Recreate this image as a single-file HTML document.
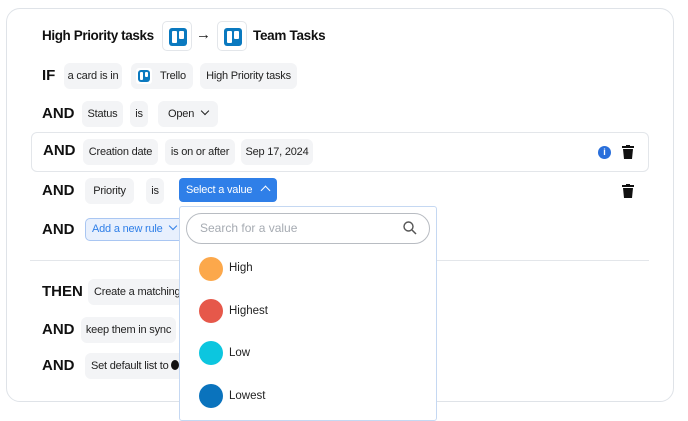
<!DOCTYPE html>
<html><head><style>
*{margin:0;padding:0;box-sizing:border-box}
body{width:688px;height:415px;background:#fff;font-family:"Liberation Sans",sans-serif;position:relative;overflow:hidden;color:#1a1a1a}
.a{position:absolute}
.card{left:6px;top:8px;width:668px;height:394px;border:1px solid #dfe3e8;border-radius:14px}
.k{position:absolute;font-weight:bold;font-size:15px;color:#111}
.chip{position:absolute;height:26px;background:#f3f4f6;border-radius:6px;font-size:11px;letter-spacing:-0.2px;line-height:26px;text-align:center;color:#222;white-space:nowrap;overflow:hidden}
.ib{position:absolute;width:30px;height:30px;border:1px solid #e3e6ea;border-radius:5px;background:#fff}
.tl{position:absolute;background:#0a79bf;border-radius:3px}
.tl i{position:absolute;background:#fff;border-radius:1px}
.dot{position:absolute;width:24px;height:24px;border-radius:50%}
.opt{position:absolute;font-size:11.5px;color:#222}
</style></head><body>
<div class="a card"></div>
<div class="k" style="left:42px;top:28px;font-size:13.5px;letter-spacing:-0.4px">High Priority tasks</div>
<div class="ib" style="left:162px;top:21px"><div class="tl" style="left:6px;top:6px;width:18px;height:18px"><i style="left:3px;top:3px;width:5px;height:12px"></i><i style="left:10px;top:3px;width:5px;height:8px"></i></div></div>
<div class="a" style="left:196px;top:26px;font-size:15px">→</div>
<div class="ib" style="left:217px;top:21px"><div class="tl" style="left:6px;top:6px;width:18px;height:18px"><i style="left:3px;top:3px;width:5px;height:12px"></i><i style="left:10px;top:3px;width:5px;height:8px"></i></div></div>
<div class="k" style="left:253px;top:28px;font-size:13.5px;letter-spacing:-0.3px">Team Tasks</div>

<div class="k" style="left:42px;top:67px">IF</div>
<div class="chip" style="left:64px;top:63px;width:58px">a card is in</div>
<div class="chip" style="left:131px;top:63px;width:62px;padding-left:22px">Trello</div>
<div class="a" style="left:136px;top:68px;width:16px;height:16px;background:#fff;border-radius:3px"><div class="tl" style="left:2px;top:2px;width:12px;height:12px"><i style="left:2px;top:2px;width:3px;height:8px"></i><i style="left:7px;top:2px;width:3px;height:5px"></i></div></div>
<div class="chip" style="left:200px;top:63px;width:97px">High Priority tasks</div>

<div class="k" style="left:42px;top:105px">AND</div>
<div class="chip" style="left:82px;top:101px;width:41px">Status</div>
<div class="chip" style="left:130px;top:101px;width:18px">is</div>
<div class="chip" style="left:158px;top:101px;width:60px">Open <span style="display:inline-block;width:6px;height:6px;border-right:1.5px solid #222;border-bottom:1.5px solid #222;transform:rotate(45deg);margin:0 0 3px 5px"></span></div>

<div class="a" style="left:31px;top:132px;width:618px;height:40px;border:1px solid #e3e6ea;border-radius:6px"></div>
<div class="k" style="left:43px;top:142px">AND</div>
<div class="chip" style="left:83px;top:139px;width:75px">Creation date</div>
<div class="chip" style="left:165px;top:139px;width:70px">is on or after</div>
<div class="chip" style="left:241px;top:139px;width:72px">Sep 17, 2024</div>
<div class="a" style="left:598px;top:146px;width:13px;height:13px;border-radius:50%;background:#2a6fdb;color:#fff;font-size:9px;font-weight:bold;text-align:center;line-height:13px">i</div>
<svg class="a" style="left:622px;top:145px" width="12" height="14" viewBox="0 0 12 14"><rect x="0" y="1" width="12" height="2" fill="#111"/><rect x="4" y="0" width="4" height="2" fill="#111"/><path d="M1 4h10l-1 10H2z" fill="#111"/></svg>

<div class="k" style="left:42px;top:182px">AND</div>
<div class="chip" style="left:85px;top:178px;width:49px">Priority</div>
<div class="chip" style="left:146px;top:178px;width:18px">is</div>
<div class="a" style="left:179px;top:178px;width:98px;height:24px;background:#2f7fe8;border-radius:4px;color:#fff;font-size:11px;letter-spacing:-0.2px;line-height:24px;padding-left:7px;white-space:nowrap">Select a value <span style="display:inline-block;width:7px;height:7px;border-left:1.5px solid #fff;border-top:1.5px solid #fff;transform:rotate(45deg);margin-left:7px;vertical-align:-1px"></span></div>
<svg class="a" style="left:622px;top:184px" width="12" height="14" viewBox="0 0 12 14"><rect x="0" y="1" width="12" height="2" fill="#111"/><rect x="4" y="0" width="4" height="2" fill="#111"/><path d="M1 4h10l-1 10H2z" fill="#111"/></svg>

<div class="k" style="left:42px;top:221px">AND</div>
<div class="a" style="left:85px;top:218px;width:100px;height:23px;background:#e8f0fd;border:1px solid #a9c6f2;border-radius:5px;color:#2f7fe8;font-size:11px;letter-spacing:-0.2px;line-height:21px;padding-left:6px;white-space:nowrap">Add a new rule <span style="display:inline-block;width:6px;height:6px;border-right:1.5px solid #2f7fe8;border-bottom:1.5px solid #2f7fe8;transform:rotate(45deg);margin:0 0 3px 5px"></span></div>

<div class="a" style="left:30px;top:260px;width:619px;height:1px;background:#e3e6ea"></div>

<div class="k" style="left:42px;top:283px">THEN</div>
<div class="chip" style="left:88px;top:279px;width:100px;text-align:left;padding-left:6px">Create a matching</div>
<div class="k" style="left:42px;top:321px">AND</div>
<div class="chip" style="left:81px;top:317px;width:95px">keep them in sync</div>
<div class="k" style="left:42px;top:357px">AND</div>
<div class="chip" style="left:85px;top:353px;width:100px;text-align:left;padding-left:6px">Set default list to <span style="display:inline-block;width:8px;height:10px;background:#111;border-radius:50%;vertical-align:-1px"></span></div>

<div class="a" style="left:179px;top:206px;width:258px;height:215px;background:#fff;border:1px solid #c5d8f2;border-radius:3px"></div>
<div class="a" style="left:186px;top:213px;width:244px;height:31px;border:1px solid #b8bcc2;border-radius:16px;font-size:12px;color:#a6abb2;line-height:29px;padding-left:13px">Search for a value</div>
<svg class="a" style="left:403px;top:221px" width="14" height="14" viewBox="0 0 14 14"><circle cx="5.5" cy="5.5" r="4.5" fill="none" stroke="#555" stroke-width="1.4"/><path d="M9 9l4 4" stroke="#555" stroke-width="1.5"/></svg>
<div class="dot" style="left:199px;top:257px;background:#fca84b"></div><div class="opt" style="left:229px;top:262px">High</div>
<div class="dot" style="left:199px;top:299px;background:#e6584a"></div><div class="opt" style="left:229px;top:305px">Highest</div>
<div class="dot" style="left:199px;top:341px;background:#0cc6df"></div><div class="opt" style="left:229px;top:347px">Low</div>
<div class="dot" style="left:199px;top:384px;background:#0a73bd"></div><div class="opt" style="left:229px;top:390px">Lowest</div>
</body></html>
